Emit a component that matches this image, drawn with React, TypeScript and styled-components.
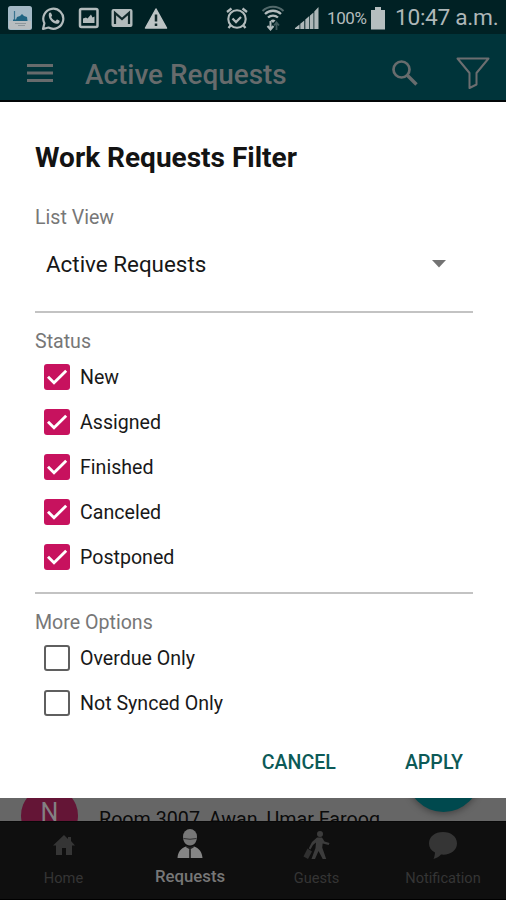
import React from "react";
import styled, { createGlobalStyle } from "styled-components";

const GlobalStyle = createGlobalStyle`
  * { box-sizing: border-box; }
  body { margin: 0; background: #fff; font-family: Roboto, sans-serif; }
`;

const Screen = styled.div`
  width: 506px;
  height: 900px;
  display: flex;
  flex-direction: column;
  overflow: hidden;
  white-space: nowrap;
`;

const StatusBar = styled.div`
  height: 34px;
  flex: none;
  display: flex;
  align-items: center;
  justify-content: space-between;
  padding: 2px 7px 0 7px;
  background: #002124;
`;

const Notifications = styled.div`
  display: flex;
  align-items: center;
  gap: 8px;
`;

const Indicators = styled.div`
  display: flex;
  align-items: center;
`;

const Glyph = styled.svg<{ $mr?: number }>`
  display: block;
  flex: none;
  margin-right: ${(p) => p.$mr ?? 0}px;
`;

const Percent = styled.span`
  width: 40px;
  margin-right: 3px;
  font-size: 17px;
  letter-spacing: -0.4px;
  color: #b4bcbd;
`;

const Clock = styled.span`
  width: 104px;
  font-size: 22.7px;
  line-height: 28px;
  letter-spacing: -0.3px;
  color: #aeb7b8;
`;

const AppBar = styled.div`
  height: 68px;
  flex: none;
  display: flex;
  align-items: center;
  padding: 12px 16px 0 26px;
  background: #00343a;
  border-bottom: 2px solid #030708;
`;

const BarTitle = styled.div`
  flex: 1;
  padding: 4px 0 0 31px;
  font-size: 27.9px;
  font-weight: 500;
  line-height: 32px;
  color: #676b6c;
`;

const Dialog = styled.section`
  height: 696px;
  flex: none;
  display: flex;
  flex-direction: column;
  padding: 39px 33px 0 35px;
  background: #fff;
`;

const DialogTitle = styled.h1`
  margin: 0;
  height: 34px;
  font-size: 28px;
  font-weight: 700;
  line-height: 34px;
  color: #131313;
`;

const Label = styled.div<{ $top: number }>`
  height: 24px;
  flex: none;
  margin-top: ${(p) => p.$top}px;
  font-size: 19.6px;
  line-height: 24px;
  color: #777;
`;

const Select = styled.div`
  height: 83px;
  flex: none;
  display: flex;
  justify-content: space-between;
  padding: 19px 27px 0 11px;
  font-size: 22.4px;
  line-height: 30px;
  color: #171717;
  border-bottom: 2px solid #c3c3c3;
`;

const Caret = styled.svg`
  margin-top: 11px;
`;

const Options = styled.div<{ $divided?: boolean }>`
  flex: none;
  padding-bottom: ${(p) => (p.$divided ? 13 : 0)}px;
  border-bottom: ${(p) => (p.$divided ? "2px solid #c3c3c3" : "none")};
`;

const Option = styled.div`
  height: 45px;
  display: flex;
  align-items: center;
  padding-left: 9px;
  gap: 10px;
  font-size: 19.6px;
  line-height: 24px;
  color: #191919;
`;

const OptionText = styled.span`
  padding-top: 3px;
`;

const Box = styled.span<{ $checked: boolean }>`
  width: 26px;
  height: 26px;
  display: grid;
  place-items: center;
  border-radius: 3px;
  border: ${(p) => (p.$checked ? "none" : "2px solid #5f5f5f")};
  background: ${(p) => (p.$checked ? "#c7125e" : "#fff")};
`;

const Actions = styled.div`
  display: flex;
  justify-content: flex-end;
  gap: 69px;
  margin-top: 25px;
  padding-right: 10px;
`;

const Action = styled.button`
  padding: 0;
  border: 0;
  background: none;
  font: 500 19.6px/26px Roboto, sans-serif;
  color: #0c5a57;
`;

const ListPeek = styled.div`
  position: relative;
  height: 23px;
  flex: none;
  overflow: hidden;
  padding: 10px 0 0 99px;
  font-size: 19.7px;
  line-height: 24px;
  color: #0b0b0b;
  background: #666;
`;

const Avatar = styled.div`
  position: absolute;
  left: 21px;
  top: -11px;
  width: 57px;
  height: 57px;
  border-radius: 50%;
  padding-top: 11px;
  text-align: center;
  font-size: 25px;
  line-height: 30px;
  color: #838083;
  background: #641536;
`;

const Fab = styled.div`
  position: absolute;
  left: 407px;
  top: -59px;
  width: 73px;
  height: 73px;
  border-radius: 50%;
  background: #00494e;
  box-shadow: 0 2px 7px rgba(0, 0, 0, 0.35);
`;

const Nav = styled.nav`
  flex: 1;
  display: grid;
  grid-template-columns: 127px 126px 127px 126px;
  background: #0f0f0f;
  border-top: 1px solid #080808;
  border-bottom: 1px solid #000;
`;

const Tab = styled.div<{ $active?: boolean }>`
  display: flex;
  flex-direction: column;
  align-items: center;
  padding-top: ${(p) => (p.$active ? 6 : 8)}px;
  gap: ${(p) => (p.$active ? 6 : 7)}px;
  font-size: ${(p) => (p.$active ? 16.8 : 14.6)}px;
  font-weight: ${(p) => (p.$active ? 500 : 400)};
  line-height: 22px;
  color: ${(p) => (p.$active ? "#777" : "#353535")};
`;

const statuses = ["New", "Assigned", "Finished", "Canceled", "Postponed"];
const extras = ["Overdue Only", "Not Synced Only"];

function CheckOption({ label, checked }: { label: string; checked: boolean }) {
  return (
    <Option>
      <Box $checked={checked}>
        {checked && (
          <svg width="26" height="26" viewBox="0 0 26 26">
            <path d="M4 12.8 10 18.7 22.2 6.7" fill="none" stroke="#fff" strokeWidth="2.9" />
          </svg>
        )}
      </Box>
      <OptionText>{label}</OptionText>
    </Option>
  );
}

export default function App() {
  return (
    <>
      <GlobalStyle />
      <Screen>
        <StatusBar>
          <Notifications>
            <Glyph width="26" height="26" viewBox="0 0 26 26">
              <rect x="1" y="1" width="24" height="24" rx="2.5" fill="#a3b9c6" />
              <rect x="2" y="16" width="22" height="8" fill="#b8bdc0" />
              <path d="M7.500 6v10" stroke="#3b7590" strokeWidth="1.2" />
              <path d="M6 14.500h3l1-2.500 3-1 2-2 2 2 3 1 .5 4H6z" fill="#1f6482" />
              <path d="M8 18.500h11M11 20.500h7" stroke="#8d979c" />
            </Glyph>
            <Glyph width="25" height="25" viewBox="0 0 25 25" $mr={4}>
              <path d="M2 23l1.400-5.700A10 10 0 1 1 7.500 21.500z" fill="none" stroke="#b2bbbc" strokeWidth="2.200" strokeLinejoin="round" />
              <path d="M8 7.200c.7-1 1.800-1 2.200 0l.9 2.100c.2.600-.9 1.400-.8 1.900 1 1.800 2.200 3 4 3.700.7 0 1.300-1.600 1.900-1.300l2.100 1c.8.500.2 2.200-.9 2.800-4.500 1.900-11.100-4.600-9.400-10.200z" fill="#b2bbbc" />
            </Glyph>
            <Glyph width="22" height="24" viewBox="0 0 22 24" $mr={3}>
              <rect x="2" y="3" width="17.500" height="18" rx="1.500" fill="none" stroke="#b2bbbc" strokeWidth="2.500" />
              <path d="M5 17v-4.500l3-1 1.500 1L13 8.500l1.500 3 2-1V17z" fill="#b2bbbc" />
            </Glyph>
            <Glyph width="22" height="20" viewBox="0 0 22 20" $mr={3}>
              <rect x=".5" y="1" width="21" height="18" rx="2" fill="#b2bbbc" />
              <path d="M4 16V5l7 6 7-6v11" fill="none" stroke="#10282a" strokeWidth="2.200" />
            </Glyph>
            <Glyph width="24" height="23" viewBox="0 0 24 23">
              <path d="M12 2 22.500 21H1.500z" fill="#bdc4c5" stroke="#bdc4c5" strokeWidth="1.500" strokeLinejoin="round" />
              <path d="M12 7.500v7M12 16.500v2.500" stroke="#10282a" strokeWidth="2.500" />
            </Glyph>
          </Notifications>
          <Indicators>
            <Glyph width="24" height="24" viewBox="0 0 24 24" $mr={12}>
              <circle cx="12" cy="13" r="8.700" fill="none" stroke="#b2bbbc" strokeWidth="2.100" />
              <path d="M7.500 12.500 11 16l5-5M2 6l4.500-3.500M17.500 2.500 22 6M6 19l-2.500 3M18 19l2.500 3" fill="none" stroke="#b2bbbc" strokeWidth="2.300" />
            </Glyph>
            <Glyph width="24" height="26" viewBox="0 0 24 26" $mr={10}>
              <path d="M1.500 6a15 15 0 0 1 21 0" fill="none" stroke="#52696b" strokeWidth="2" />
              <path d="M4 9a11.500 11.500 0 0 1 16 0M7 12.500a7.500 7.500 0 0 1 10 0" fill="none" stroke="#b2bbbc" strokeWidth="2.300" />
              <path d="M9.500 15.500a4 4 0 0 1 5 0L12 18z" fill="#b2bbbc" />
              <path d="M9.500 16v8M6.500 21l3 3.500 3-3.500" fill="none" stroke="#b2bbbc" strokeWidth="2" />
              <path d="M15.500 25v-7M13 20.500l2.500-3 2.500 3" fill="none" stroke="#415b5d" strokeWidth="1.800" />
            </Glyph>
            <Glyph width="24" height="24" viewBox="0 0 24 24" $mr={8}>
              <path d="M0 23v-1l4.500-3.500V23zM5.300 23v-5.200l4-3.300V23zM10.300 23V13.500l4-3.500V23zM15 23V9.500L18.500 6.500V23zM19.300 23V5.500L23.500 1v22z" fill="#adb7b8" />
            </Glyph>
            <Percent>100%</Percent>
            <Glyph width="16" height="25" viewBox="0 0 16 25" $mr={9}>
              <path d="M5 1h6v3h4v19.500H1V4h4z" fill="#b5bebf" />
            </Glyph>
            <Clock>10:47 a.m.</Clock>
          </Indicators>
        </StatusBar>
        <AppBar>
          <Glyph width="28" height="20" viewBox="0 0 28 20">
            <path d="M1 2.500h26M1 10h26M1 17.500h26" stroke="#676b6c" strokeWidth="3" />
          </Glyph>
          <BarTitle>Active Requests</BarTitle>
          <Glyph width="28" height="28" viewBox="0 0 28 28" $mr={36}>
            <circle cx="10.500" cy="10.500" r="8" fill="none" stroke="#686c6d" strokeWidth="2.700" />
            <path d="M16.500 16.500 25.500 25.500" stroke="#686c6d" strokeWidth="3.300" />
          </Glyph>
          <Glyph width="35" height="34" viewBox="0 0 35 34">
            <path d="M2.500 2.500h31L21.500 17v11.500L14.500 32V17z" fill="none" stroke="#6c6e70" strokeWidth="2" strokeLinejoin="round" />
          </Glyph>
        </AppBar>
        <Dialog>
          <DialogTitle>Work Requests Filter</DialogTitle>
          <Label $top={31}>List View</Label>
          <Select>
            <span>Active Requests</span>
            <Caret width="14" height="8" viewBox="0 0 14 8">
              <path d="M0 0h14L7 7.500z" fill="#737373" />
            </Caret>
          </Select>
          <Label $top={17}>Status</Label>
          <Options $divided>
            {statuses.map((s) => (
              <CheckOption key={s} label={s} checked />
            ))}
          </Options>
          <Label $top={17}>More Options</Label>
          <Options>
            {extras.map((s) => (
              <CheckOption key={s} label={s} checked={false} />
            ))}
          </Options>
          <Actions>
            <Action>CANCEL</Action>
            <Action>APPLY</Action>
          </Actions>
        </Dialog>
        <ListPeek>
          <Avatar>N</Avatar>
          <span>Room 3007, Awan, Umar Farooq</span>
          <Fab />
        </ListPeek>
        <Nav>
          <Tab>
            <Glyph width="24" height="30" viewBox="0 0 24 30">
              <path d="M12 5 1 15.500h3V25h6v-7h4v7h6v-9.500h3L19 11V7h-3v2z" fill="#353535" />
            </Glyph>
            <span>Home</span>
          </Tab>
          <Tab $active>
            <Glyph width="26" height="31" viewBox="0 0 26 31">
              <path d="M6 8.500a7 7.500 0 0 1 14 0c0 5-2.500 9-7 9s-7-4-7-9z" fill="#777" />
              <path d="M6.500 10.500q6.500 1.500 13 0" fill="none" stroke="#303030" strokeWidth="1" />
              <path d="M.5 30c.5-6 3-9.500 8.500-11.500l4 1.500 4-1.500c5.500 2 8 5.500 8.500 11.500z" fill="#858585" />
              <path d="M9.500 18.500l3.500 2 3.500-2M13 20.500V30" fill="none" stroke="#222" strokeWidth="1.700" />
            </Glyph>
            <span>Requests</span>
          </Tab>
          <Tab>
            <Glyph width="28" height="30" viewBox="0 0 28 30">
              <circle cx="17" cy="4" r="3" fill="#3c3c3c" />
              <path d="M14 7.500h5l2.500 4 5 1.500-.8 2-6-1.500-.5 4 4 11.500h-3.500L15.500 21 12 29H8.500l4-11 .5-5.500-3 2.500-2.500 4.500-1.800-1L9 12z" fill="#3c3c3c" />
              <path d="M4.500 18.500l4.500 3-4 7.500-4.500-2.500z" fill="#303030" />
            </Glyph>
            <span>Guests</span>
          </Tab>
          <Tab>
            <Glyph width="30" height="30" viewBox="0 0 30 30">
              <path d="M15 2C7 2 1 6.500 1 13.500c0 4 2 7 6 9-.2 2-.3 4-1.500 6.500 4-1 6-3 7.500-4.500 9 1 16-4 16-11S23 2 15 2z" fill="#353535" />
            </Glyph>
            <span>Notification</span>
          </Tab>
        </Nav>
      </Screen>
    </>
  );
}
